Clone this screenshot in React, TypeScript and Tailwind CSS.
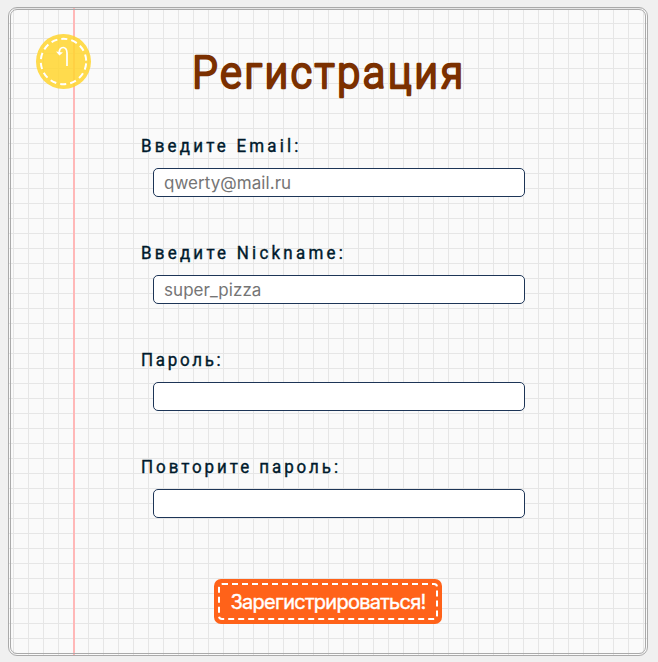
type FieldProps = {
  id: string;
  label: string;
  type: string;
  placeholder?: string;
  tracking: string;
};

const fields: FieldProps[] = [
  { id: "email", label: "Введите Email:", type: "email", placeholder: "qwerty@mail.ru", tracking: "tracking-[3.4px]" },
  { id: "nickname", label: "Введите Nickname:", type: "text", placeholder: "super_pizza", tracking: "tracking-[3.45px]" },
  { id: "password", label: "Пароль:", type: "password", tracking: "tracking-[2.9px]" },
  { id: "repeat", label: "Повторите пароль:", type: "password", tracking: "tracking-[3.15px]" },
];

function Field({ id, label, type, placeholder, tracking }: FieldProps) {
  return (
    <div className="flex h-[107px] flex-col">
      <label
        htmlFor={id}
        className={`h-6 origin-left scale-x-[0.94] self-start whitespace-nowrap pt-px font-['Roboto',sans-serif] text-[18px] leading-6 font-normal text-[#001a2c] [-webkit-text-stroke:0.4px_#001a2c] ${tracking}`}
      >
        {label}
      </label>
      <input
        id={id}
        type={type}
        placeholder={placeholder}
        className="mt-[11px] ml-3 h-[29px] w-[372px] rounded-[5px] border border-[#1d3557] bg-white px-[10px] font-['Inter',sans-serif] text-[17px] tracking-[0.05px] outline-none placeholder:text-[#757575]"
      />
    </div>
  );
}

function BackButton() {
  return (
    <button aria-label="Назад" className="absolute top-[24px] left-[25px] size-[55px]">
      <svg viewBox="0 0 55 55" className="size-full" fill="none">
        <circle cx="27.5" cy="27.5" r="27.5" fill="#ffd52e" fillOpacity="0.85" />
        <circle cx="27.5" cy="27.5" r="22.7" stroke="#fff" strokeWidth="2" strokeDasharray="6.2 4" strokeDashoffset="-2" />
        <path d="M31 32V19C31 11.5 23.2 11.8 23.2 19" stroke="#fff" strokeWidth="1.7" />
        <path d="M20 17.6L27 18.6L23.4 21.6Z" fill="#fff" />
      </svg>
    </button>
  );
}

export default function App() {
  return (
    <div className="h-[662px] w-[658px] overflow-hidden bg-[#f0f0f0] pt-[7px] pl-2">
      <main className="relative h-[649px] w-[640px] rounded-[9px] border-[3px] border-double border-[#aaa] bg-[#fafafa] bg-[linear-gradient(90deg,transparent_62px,#ffb8b8_62px,#ffb8b8_64px,transparent_64px),linear-gradient(90deg,#e6e6e6_1px,transparent_1px),linear-gradient(#e6e6e6_1px,transparent_1px)] bg-[size:100%_100%,15px_15px,15px_15px] bg-[position:0_0,2px_0,0_13px]">
        <BackButton />
        <h1 className="h-[123px] pt-[30px] pl-[179px]">
          <svg width="290" height="70" className="block overflow-visible">
            <text
              x="2.5"
              y="48.5"
              transform="scale(0.93 1)"
              textLength="291"
              className="font-['Roboto',sans-serif] text-[44.5px] font-light"
              fill="#7b3000"
              stroke="#7b3000"
              strokeWidth="2.6"
              strokeLinejoin="round"
            >
              Регистрация
            </text>
          </svg>
        </h1>
        <form className="flex flex-col pl-[130px]">
          {fields.map((field) => (
            <Field key={field.id} {...field} />
          ))}
          <button
            type="button"
            className="mt-[18px] ml-[73px] h-[45px] w-[228px] rounded-[7px] bg-[#ff6219] p-1 font-['Inter',sans-serif] text-[20px] tracking-[-0.75px] whitespace-nowrap text-white"
          >
            <span className="flex size-full items-center justify-center rounded-[4px] border-2 border-dashed border-white [-webkit-text-stroke:0.4px_white]">
              Зарегистрироваться!
            </span>
          </button>
        </form>
      </main>
    </div>
  );
}
